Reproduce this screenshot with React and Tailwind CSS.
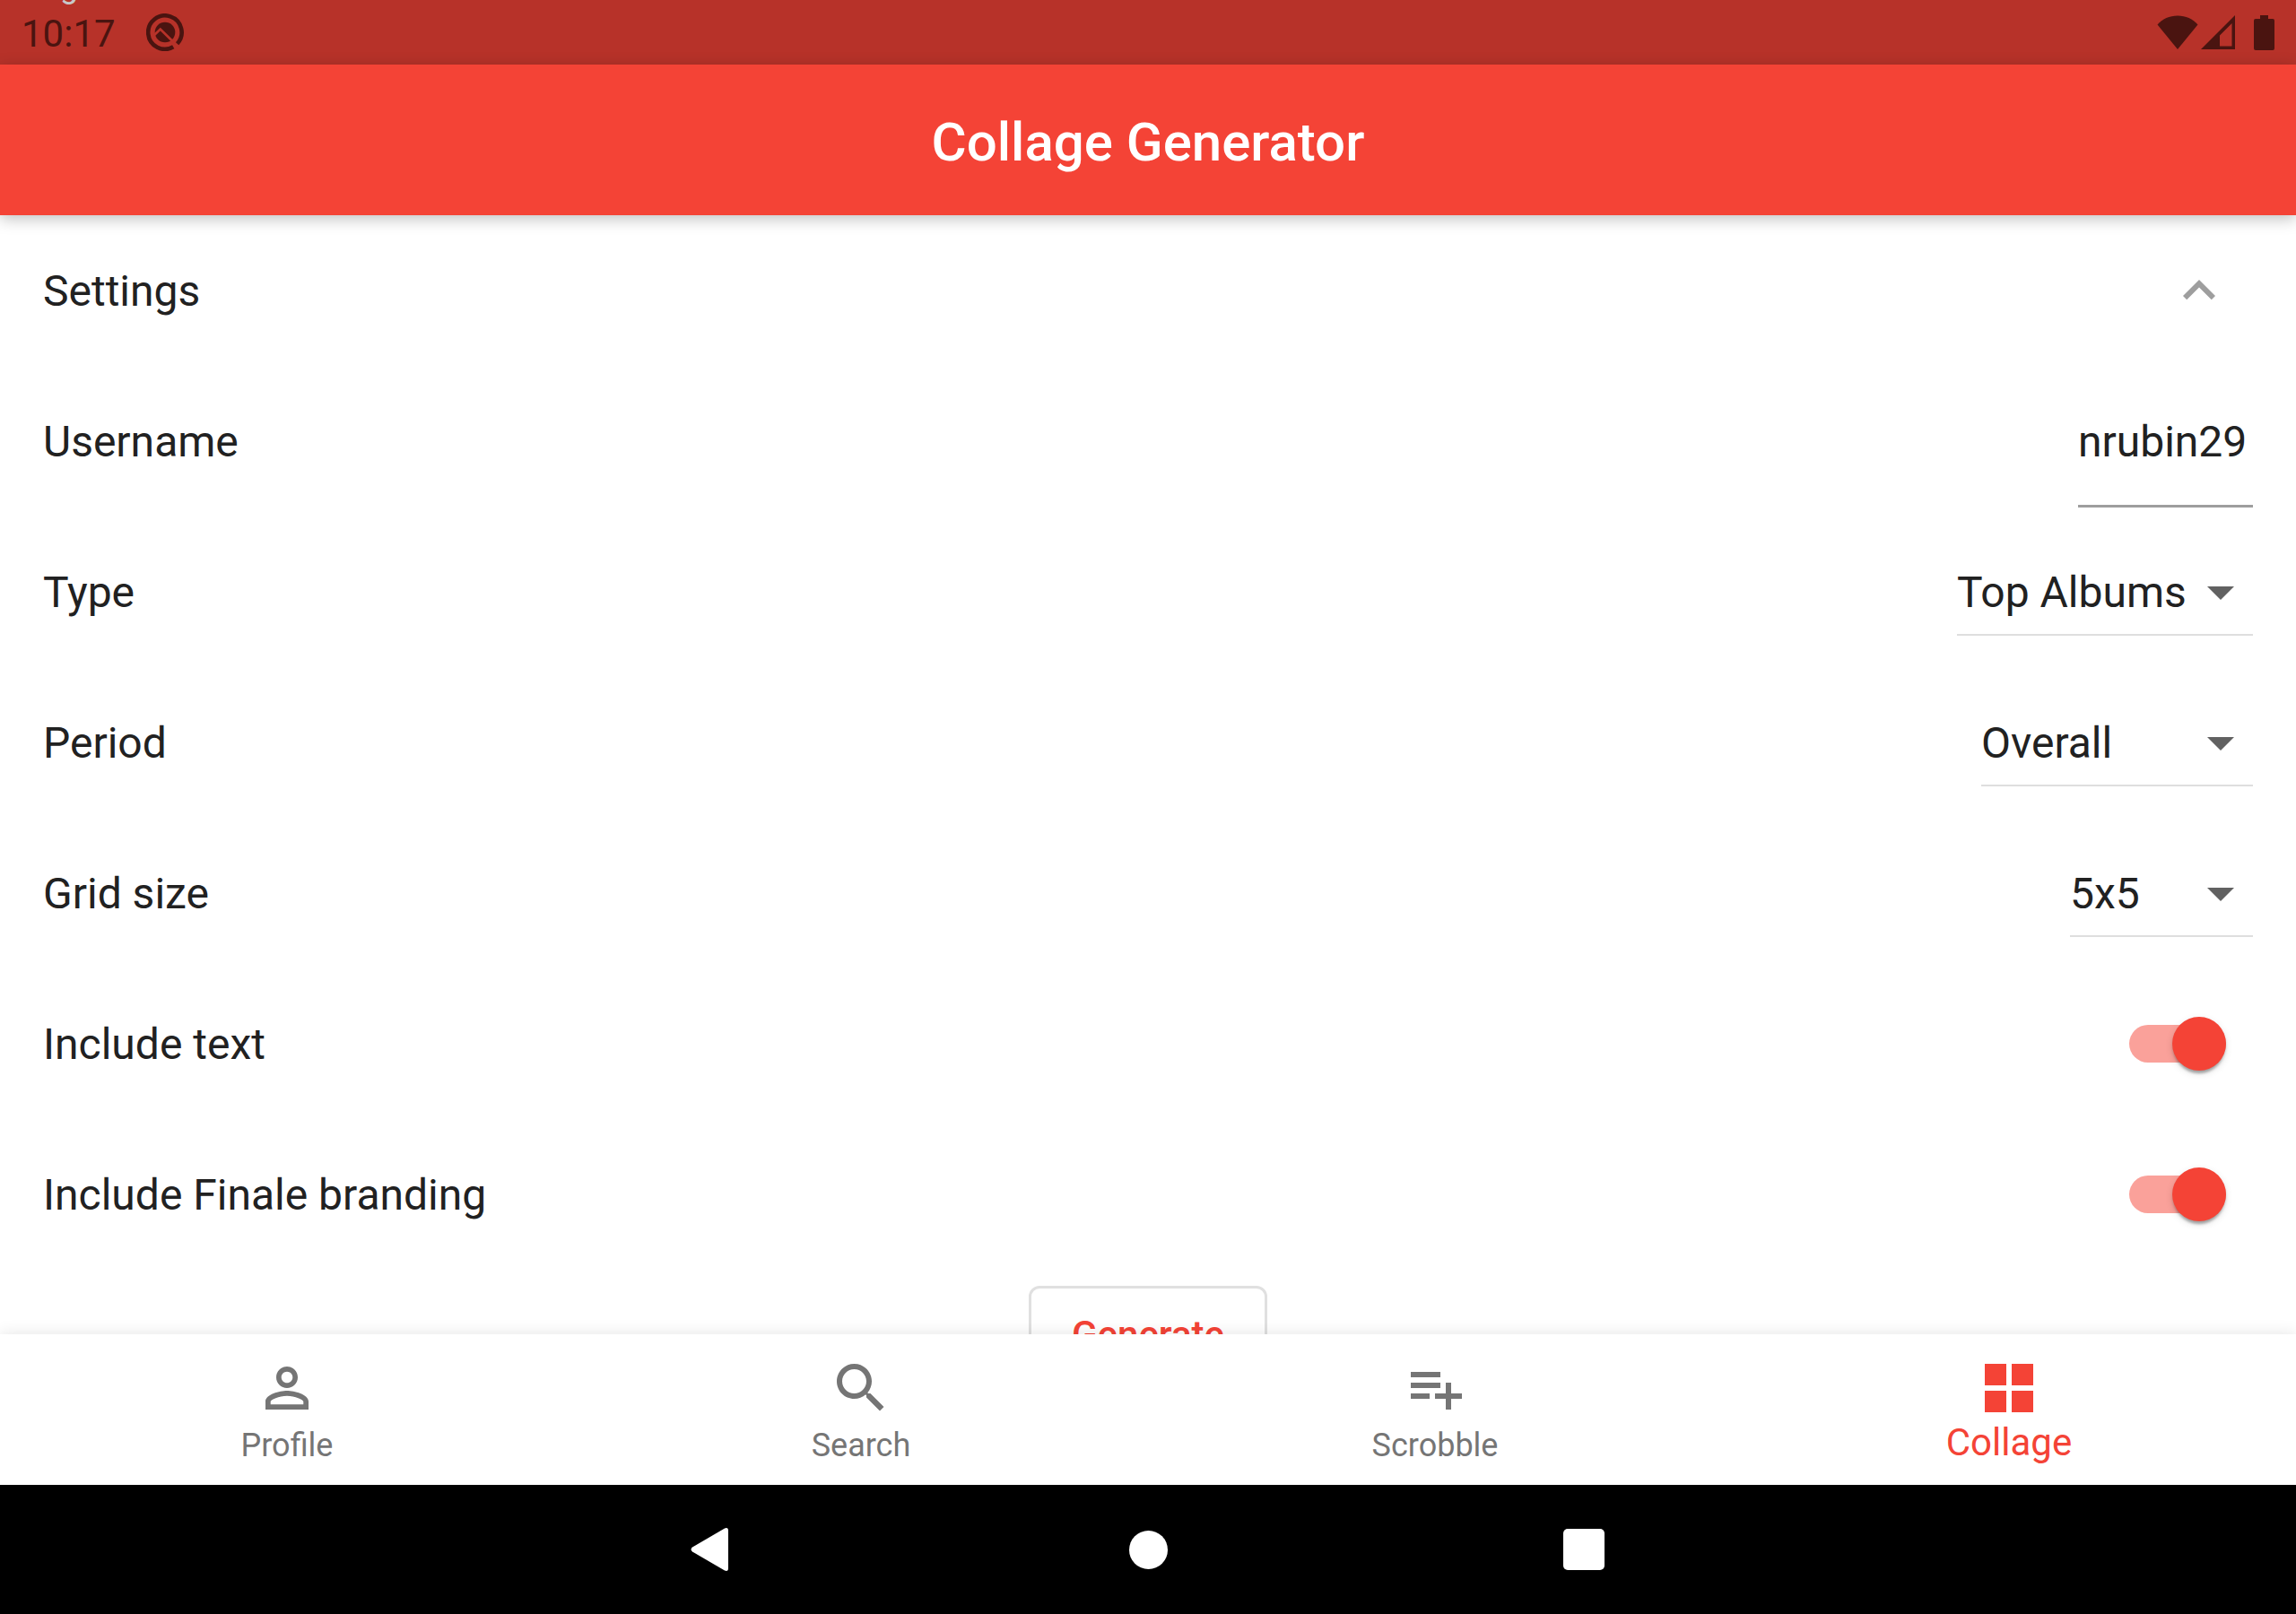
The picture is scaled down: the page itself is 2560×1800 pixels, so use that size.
import { useState } from "react";

function Icon({ d, className = "size-[72px]" }) {
  return (
    <svg viewBox="0 0 24 24" fill="currentColor" aria-hidden="true" className={className}>
      <path d={d} />
    </svg>
  );
}

function StatusBar() {
  return (
    <div className="relative flex h-[72px] shrink-0 items-center overflow-hidden bg-[#b73229] px-6 text-[#4a1410]">
      <span className="absolute -top-[35px] left-[67px] text-[36px] leading-[40px] text-[#c8c8c8]" aria-hidden="true">
        g
      </span>
      <time className="pt-1 text-[42px] leading-[48px]">10:17</time>
      <svg viewBox="0 0 42 42" className="ml-[34px] size-[42px]" aria-hidden="true">
        <path d="M30.200 37.300A18.700 18.700 0 1 1 34.600 33.800" fill="none" stroke="currentColor" strokeWidth="4.600" />
        <circle cx="21" cy="21" r="11.300" fill="currentColor" />
        <path d="M8.500 24.500L15.800 17.600L32.500 34" fill="none" stroke="#b73229" strokeWidth="2.800" />
      </svg>
      <div className="ml-auto flex items-center">
        <svg viewBox="0 0 46 38" className="h-[38px] w-[46px]" fill="currentColor" aria-hidden="true">
          <path d="M0.5 10.500C6 4 14 0.5 23 0.5S40 4 45.500 10.500L23 38Z" />
        </svg>
        <svg viewBox="0 0 38 38" className="ml-[3px] size-[38px]" fill="currentColor" fillRule="evenodd" aria-hidden="true">
          <path d="M38 0V38H0ZM34.500 9L21 22.500V34.500H34.500Z" />
        </svg>
        <svg viewBox="0 0 23 39" className="ml-[21px] h-[39px] w-[23px]" fill="currentColor" aria-hidden="true">
          <path d="M7 0h9v4h5a2 2 0 0 1 2 2v31a2 2 0 0 1-2 2H2a2 2 0 0 1-2-2V6a2 2 0 0 1 2-2h5Z" />
        </svg>
      </div>
    </div>
  );
}

function Row({ label, htmlFor, children }) {
  return (
    <div className="flex h-[168px] items-center justify-between px-12">
      <label htmlFor={htmlFor} className="pt-0.5">
        {label}
      </label>
      {children}
    </div>
  );
}

function Dropdown({ id, options, width }) {
  return (
    <div className={`relative flex ${width}`}>
      <select
        id={id}
        className="h-[98px] w-full appearance-none border-y-2 border-t-transparent border-b-[#dedede] bg-transparent pt-0.5 outline-none"
      >
        {options.map((o) => (
          <option key={o}>{o}</option>
        ))}
      </select>
      <Icon
        d="M7 10l5 5 5-5z"
        className="pointer-events-none absolute top-[13px] right-0 size-[72px] text-[#616161]"
      />
    </div>
  );
}

function Toggle({ id }) {
  const [on, setOn] = useState(true);
  return (
    <input
      id={id}
      type="checkbox"
      role="switch"
      checked={on}
      onChange={(e) => setOn(e.target.checked)}
      className="mr-[30px] flex h-[42px] w-[108px] appearance-none items-center rounded-full bg-[#bdbdbd] before:size-[60px] before:shrink-0 before:rounded-full before:bg-[#fafafa] before:shadow-[0_6px_3px_-3px_rgba(0,0,0,0.2),0_3px_3px_rgba(0,0,0,0.14),0_3px_9px_rgba(0,0,0,0.12)] before:content-[''] checked:justify-end checked:bg-[#faa19a] checked:before:bg-[#f44336]"
    />
  );
}

const TABS = [
  {
    label: "Profile",
    d: "M12 5.900c1.160 0 2.100.94 2.100 2.100s-.94 2.100-2.100 2.100S9.900 9.160 9.900 8s.94-2.100 2.100-2.100m0 9c2.970 0 6.100 1.460 6.100 2.100v1.100H5.900V17c0-.64 3.130-2.100 6.100-2.100M12 4C9.790 4 8 5.790 8 8s1.790 4 4 4 4-1.790 4-4-1.790-4-4-4zm0 9c-2.670 0-8 1.340-8 4v3h16v-3c0-2.660-5.330-4-8-4z",
  },
  {
    label: "Search",
    d: "M15.500 14h-.79l-.28-.27C15.410 12.590 16 11.110 16 9.500 16 5.910 13.090 3 9.500 3S3 5.910 3 9.500 5.910 16 9.500 16c1.610 0 3.090-.59 4.230-1.570l.27.28v.79l5 4.990L20.490 19l-4.990-5zm-6 0C7.010 14 5 11.990 5 9.500S7.010 5 9.500 5 14 7.010 14 9.500 11.990 14 9.500 14z",
  },
  {
    label: "Scrobble",
    d: "M14 10H3v2h11v-2zm0-4H3v2h11V6zm4 8v-4h-2v4h-4v2h4v4h2v-4h4v-2h-4zM3 16h7v-2H3v2z",
  },
  { label: "Collage", d: "M3 3h8v8H3zM13 3h8v8h-8zM3 13h8v8H3zM13 13h8v8h-8z", active: true },
];

export default function App() {
  return (
    <div className="flex h-screen flex-col bg-white font-['Roboto',sans-serif] text-[48px] leading-[56px] text-[#212121]">
      <StatusBar />
      <header className="relative z-10 flex h-[168px] shrink-0 items-center justify-center bg-[#f44336] shadow-[0_4px_16px_rgba(0,0,0,0.25)]">
        <h1 className="pt-1.5 text-[60px] leading-[70px] font-medium text-white">Collage Generator</h1>
      </header>

      <main className="min-h-0 flex-1 overflow-hidden">
        <button type="button" className="flex h-[168px] w-full items-center justify-between pr-[72px] pl-12" aria-expanded="true">
          <span className="pt-0.5">Settings</span>
          <Icon d="M12 8l-6 6 1.410 1.410L12 10.830l4.590 4.580L18 14z" className="size-[72px] text-[#9e9e9e]" />
        </button>
        <Row label="Username" htmlFor="username">
          <input
            id="username"
            type="text"
            defaultValue="nrubin29"
            className="h-[148px] w-[195px] border-y-[3px] border-t-transparent border-b-[#9e9e9e] bg-transparent outline-none"
          />
        </Row>
        <Row label="Type" htmlFor="type">
          <Dropdown id="type" options={["Top Albums", "Top Artists", "Top Tracks"]} width="w-[330px]" />
        </Row>
        <Row label="Period" htmlFor="period">
          <Dropdown id="period" options={["Overall", "7 days", "1 month", "1 year"]} width="w-[303px]" />
        </Row>
        <Row label="Grid size" htmlFor="grid-size">
          <Dropdown id="grid-size" options={["5x5", "4x4", "3x3"]} width="w-[204px]" />
        </Row>
        <Row label="Include text" htmlFor="include-text">
          <Toggle id="include-text" />
        </Row>
        <Row label="Include Finale branding" htmlFor="include-branding">
          <Toggle id="include-branding" />
        </Row>
        <div className="flex justify-center pt-[18px]">
          <button
            type="button"
            className="h-[108px] rounded-xl border-[3px] border-[#e0e0e0] px-[45px] pt-0.5 text-[42px] leading-[48px] font-medium text-[#f44336]"
          >
            Generate
          </button>
        </div>
      </main>

      <nav className="relative z-10 grid h-[168px] shrink-0 grid-cols-4 bg-white shadow-[0_-1px_16px_rgba(0,0,0,0.1)]">
        {TABS.map((t) => (
          <a
            key={t.label}
            href={`#${t.label.toLowerCase()}`}
            aria-current={t.active ? "page" : undefined}
            className={`flex flex-col items-center pt-6 ${t.active ? "text-[#f44336]" : "text-[#757575]"}`}
          >
            <Icon d={t.d} />
            <span className={t.active ? "text-[42px] leading-[50px]" : "pt-1 text-[36px] leading-[48px]"}>{t.label}</span>
          </a>
        ))}
      </nav>

      <div className="flex h-[144px] shrink-0 items-center justify-center gap-[414px] bg-black text-white">
        <button type="button" aria-label="Back" className="flex size-[72px] items-center justify-center">
          <svg viewBox="0 0 72 72" fill="currentColor" className="size-[72px]" aria-hidden="true">
            <path d="M14 33.500Q11 36 14 38.500L50 59.500Q54 61 54 57V15Q54 11 50 12.500Z" />
          </svg>
        </button>
        <button type="button" aria-label="Home" className="flex size-[72px] items-center justify-center">
          <span className="size-[43px] rounded-full bg-white" />
        </button>
        <button type="button" aria-label="Overview" className="flex size-[72px] items-center justify-center">
          <span className="size-[46px] rounded-[5px] bg-white" />
        </button>
      </div>
    </div>
  );
}
